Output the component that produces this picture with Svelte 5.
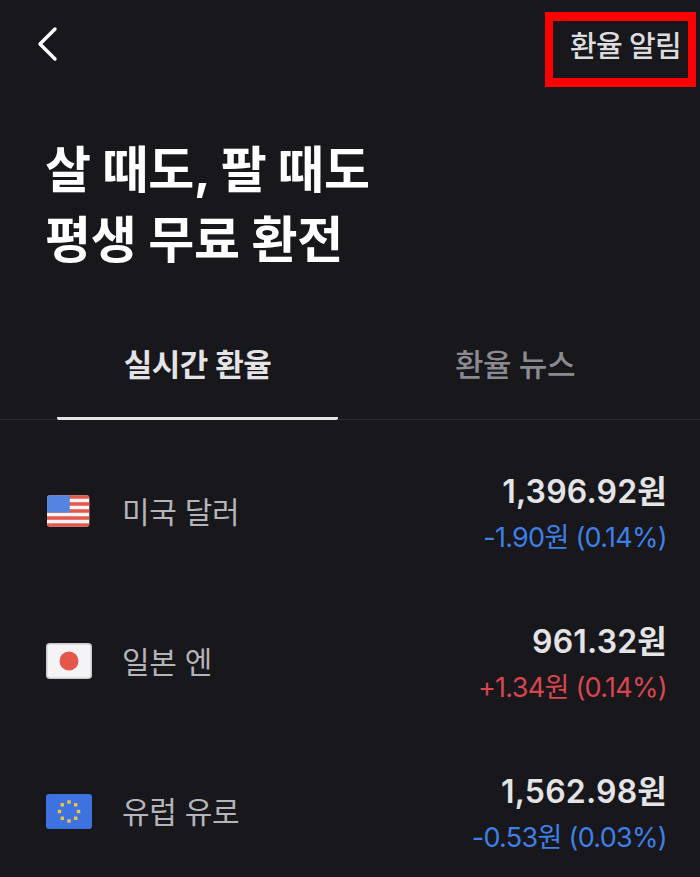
<script lang="ts">
	type Rate = { flag: string; name: string; price: string; change: string; dir: 'up' | 'down' };

	const rates: Rate[] = [
		{ flag: 'us', name: '미국 달러', price: '1,396.92원', change: '-1.90원 (0.14%)', dir: 'down' },
		{ flag: 'jp', name: '일본 엔', price: '961.32원', change: '+1.34원 (0.14%)', dir: 'up' },
		{ flag: 'eu', name: '유럽 유로', price: '1,562.98원', change: '-0.53원 (0.03%)', dir: 'down' }
	];

	const stars = Array.from({ length: 8 }, (_, i) => {
		const a = (i * Math.PI) / 4;
		return { x: 23 + Math.sin(a) * 9.5, y: 17.5 - Math.cos(a) * 9.5 };
	});

	const stripes = [0, 2, 4, 6, 8];
</script>

<main>
	<header>
		<button class="back" aria-label="뒤로">
			<svg width="24" height="36" viewBox="0 0 24 36">
				<path d="M20 3 L5 18 L20 33" fill="none" stroke="#fff" stroke-width="3.4" stroke-linecap="round" stroke-linejoin="round" />
			</svg>
		</button>
		<div class="alert">환율 알림</div>
	</header>

	<h1>살 때도, 팔 때도<br />평생 무료 환전</h1>

	<nav>
		<div class="tab active">실시간 환율</div>
		<div class="tab">환율 뉴스</div>
	</nav>

	<ul>
		{#each rates as rate}
			<li>
				<div class="left">
					<div class="flag-box">
						{#if rate.flag === 'us'}
							<svg width="42.5" height="32" viewBox="0 0 43 32" class="flag">
								<defs>
									<pattern id="canton" width="2" height="2" patternUnits="userSpaceOnUse">
										<rect width="2" height="2" fill="#4a7fe0" />
										<circle cx="1" cy="1" r="0.45" fill="#8fb2ee" />
									</pattern>
									<clipPath id="us-clip"><rect width="43" height="32" rx="3" /></clipPath>
								</defs>
								<g clip-path="url(#us-clip)">
									<rect width="43" height="32" fill="#f4f4f6" />
									{#each stripes as n}
										<rect y={n * 3.556} width="43" height="3.556" fill="#e5574a" />
									{/each}
									<rect width="23" height="17.5" fill="url(#canton)" />
								</g>
							</svg>
						{:else if rate.flag === 'jp'}
							<svg width="46" height="36" viewBox="0 0 46 36" class="flag">
								<rect x="0.75" y="0.75" width="44.5" height="34.5" rx="3" fill="#f4f4f6" stroke="#c9c9ce" stroke-width="1.5" />
								<circle cx="23" cy="18" r="9.5" fill="#e5574a" />
							</svg>
						{:else}
							<svg width="46" height="35" viewBox="0 0 46 35" class="flag">
								<rect width="46" height="35" rx="3" fill="#3d72e0" />
								{#each stars as s}
									<rect x={s.x - 1.7} y={s.y - 1.7} width="3.4" height="3.4" fill="#f3c53f" />
								{/each}
							</svg>
						{/if}
					</div>
					<span class="name">{rate.name}</span>
				</div>
				<div class="right">
					<div class="price">{rate.price}</div>
					<div class="change {rate.dir}">{rate.change}</div>
				</div>
			</li>
		{/each}
	</ul>
</main>

<style>
	:global(body) {
		background: #17171c;
		overflow: hidden;
	}

	main {
		height: 877px;
		overflow: hidden;
		background: #17171c;
		font-family: 'Inter', 'Noto Sans CJK KR', sans-serif;
	}

	header {
		height: 87px;
		display: flex;
		justify-content: space-between;
		align-items: flex-start;
		padding: 0 4px 0 35px;
	}

	.back {
		all: unset;
		display: block;
		margin-top: 26px;
		line-height: 0;
	}

	.alert {
		box-sizing: border-box;
		width: 151px;
		height: 75px;
		margin-top: 12px;
		border: 8px solid #f00;
		border-top-width: 9px;
		border-bottom-width: 9px;
		color: #dcdcde;
		font-size: 29px;
		font-weight: 500;
		line-height: 42px;
		padding: 5px 7px 0 0;
		text-align: right;
		letter-spacing: -0.7px;
		white-space: nowrap;
	}

	h1 {
		margin: 48px 0 0 45px;
		color: #fff;
		font-size: 50px;
		font-weight: 700;
		line-height: 70px;
		letter-spacing: -0.2px;
	}

	nav {
		margin-top: 60px;
		height: 84px;
		display: flex;
		padding: 0 8px 0 57px;
		border-bottom: 1px solid #2c2c33;
	}

	.tab {
		flex: none;
		width: 281px;
		padding-top: 8px;
		text-align: center;
		font-size: 31px;
		font-weight: 600;
		line-height: 44px;
		letter-spacing: -0.5px;
		color: #8a8a90;
	}

	.tab + .tab {
		width: 354px;
		font-weight: 500;
	}

	.tab.active {
		color: #e4e4e6;
		border-bottom: 3.5px solid #e4e4e6;
		border-radius: 0 0 2px 2px;
		box-sizing: border-box;
		height: 85px;
	}

	ul {
		list-style: none;
		margin: 0;
		padding: 0 33px 0 46px;
	}

	li {
		height: 150px;
		display: flex;
		justify-content: space-between;
		align-items: center;
	}

	li:first-child {
		margin-top: 16px;
	}

	.left {
		display: flex;
		align-items: center;
	}

	.flag-box {
		width: 45px;
		display: flex;
		justify-content: center;
		margin-right: 31px;
	}

	.flag {
		display: block;
		flex: none;
	}

	.name {
		color: #b4b4ba;
		font-size: 30px;
		font-weight: 400;
		letter-spacing: -0.3px;
		margin-top: -2px;
	}

	.right {
		text-align: right;
		margin-top: 7px;
	}

	.price {
		color: #e4e4e6;
		font-size: 32px;
		font-weight: 600;
		line-height: 47px;
		letter-spacing: 0.2px;
	}

	.change {
		font-size: 27px;
		line-height: 46px;
		letter-spacing: -0.7px;
	}

	.down {
		color: #3f7fe6;
	}

	.up {
		color: #d9464f;
	}
</style>
